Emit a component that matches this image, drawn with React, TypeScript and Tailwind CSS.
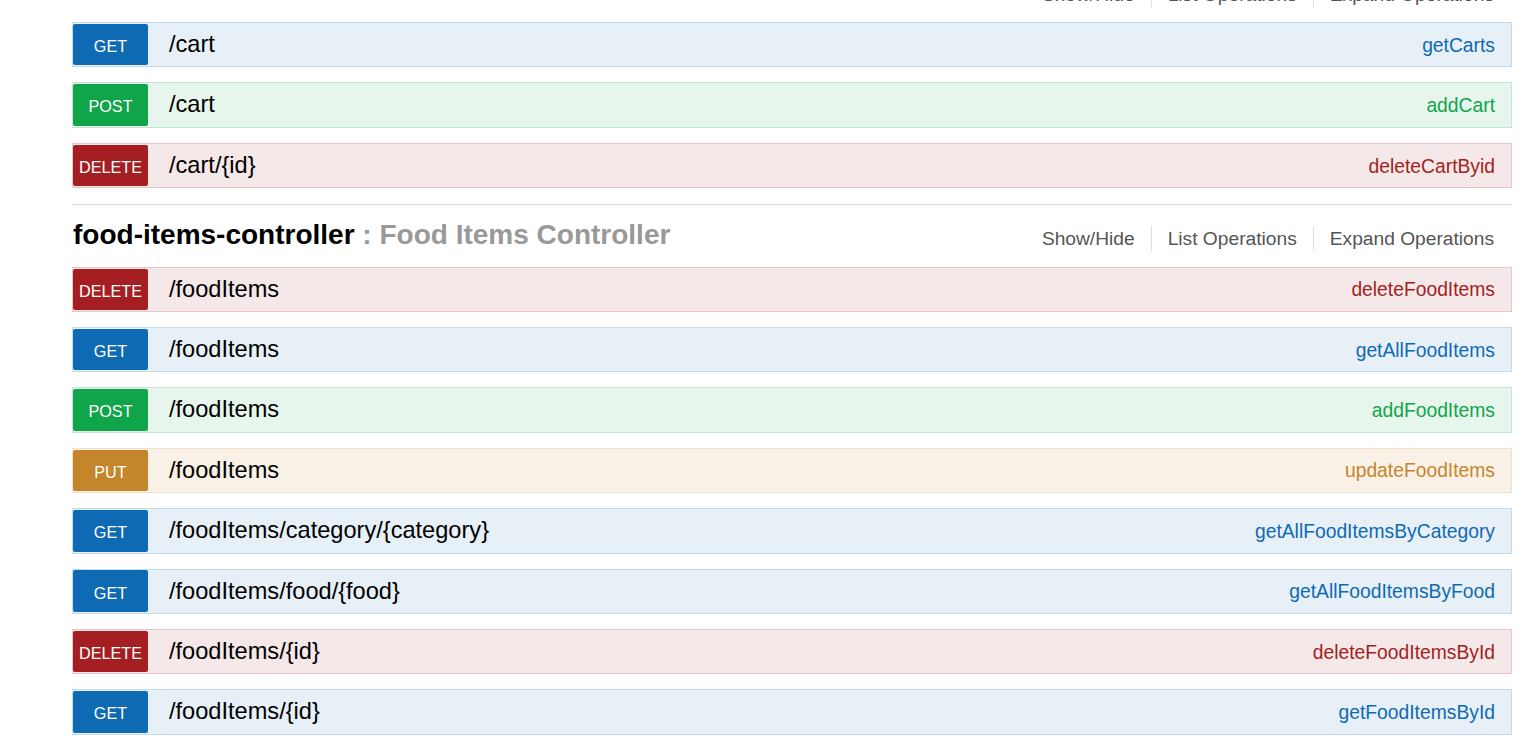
type Method = "GET" | "POST" | "PUT" | "DELETE";

type Operation = {
  method: Method;
  path: string;
  summary: string;
};

type Resource = {
  name: string;
  description: string;
  operations: Operation[];
};

const methodStyles: Record<Method, { row: string; badge: string; link: string }> = {
  GET: {
    row: "bg-[#e7f0f7] border-[#c3d9ec]",
    badge: "bg-[#0f6ab4]",
    link: "text-[#0f6ab4]",
  },
  POST: {
    row: "bg-[#e7f6ec] border-[#c3e8d1]",
    badge: "bg-[#10a54a]",
    link: "text-[#10a54a]",
  },
  PUT: {
    row: "bg-[#f9f0e6] border-[#f0e0ca]",
    badge: "bg-[#c5862b]",
    link: "text-[#c5862b]",
  },
  DELETE: {
    row: "bg-[#f5e8e8] border-[#e8c6c7]",
    badge: "bg-[#a41e22]",
    link: "text-[#a41e22]",
  },
};

const resources: Resource[] = [
  {
    name: "cart-controller",
    description: "Cart Controller",
    operations: [
      { method: "GET", path: "/cart", summary: "getCarts" },
      { method: "POST", path: "/cart", summary: "addCart" },
      { method: "DELETE", path: "/cart/{id}", summary: "deleteCartByid" },
    ],
  },
  {
    name: "food-items-controller",
    description: "Food Items Controller",
    operations: [
      { method: "DELETE", path: "/foodItems", summary: "deleteFoodItems" },
      { method: "GET", path: "/foodItems", summary: "getAllFoodItems" },
      { method: "POST", path: "/foodItems", summary: "addFoodItems" },
      { method: "PUT", path: "/foodItems", summary: "updateFoodItems" },
      { method: "GET", path: "/foodItems/category/{category}", summary: "getAllFoodItemsByCategory" },
      { method: "GET", path: "/foodItems/food/{food}", summary: "getAllFoodItemsByFood" },
      { method: "DELETE", path: "/foodItems/{id}", summary: "deleteFoodItemsById" },
      { method: "GET", path: "/foodItems/{id}", summary: "getFoodItemsById" },
    ],
  },
];

const OperationRow = ({ method, path, summary }: Operation) => {
  const style = methodStyles[method];
  return (
    <li className={`flex h-[45.4px] items-center border ${style.row}`}>
      <span
        className={`flex h-[41.5px] w-[75px] shrink-0 items-center justify-center rounded-[2px] pt-[3px] text-[16.2px] text-white ${style.badge}`}
      >
        {method}
      </span>
      <span className="flex-1 pl-[21px] text-[23.6px] text-black">{path}</span>
      <span className={`pr-[16px] pt-[3px] text-[19.3px] ${style.link}`}>{summary}</span>
    </li>
  );
};

const ResourceSection = ({ name, description, operations, last }: Resource & { last?: boolean }) => (
  <li className={`pb-4 ${last ? "" : "border-b border-[#dddddd]"}`}>
    <div className="flex h-[46px] items-end justify-between">
      <h2 className="pl-px text-[28px] font-bold leading-[1.2]">
        <span className="text-black">{name}</span>
        <span className="text-[#999999]"> : {description}</span>
      </h2>
      <ul className="mr-[2px] flex pt-px text-[19.2px] leading-[25px] text-[#555555]">
        <li className="px-4">Show/Hide</li>
        <li className="border-l border-[#dddddd] px-4">List Operations</li>
        <li className="border-l border-[#dddddd] px-4">Expand Operations</li>
      </ul>
    </div>
    <ul className="mt-[15.4px] flex flex-col gap-[15px]">
      {operations.map((op, i) => (
        <OperationRow key={`${op.method}-${op.path}-${i}`} {...op} />
      ))}
    </ul>
  </li>
);

const App = () => {
  return (
    <div className="h-screen overflow-hidden bg-white font-['Liberation_Sans',Arial,sans-serif]">
      <ul className="ml-[72px] mt-[-39.4px] w-[1440px]">
        {resources.map((resource, i) => (
          <ResourceSection key={resource.name} {...resource} last={i === resources.length - 1} />
        ))}
      </ul>
    </div>
  );
};

export default App;
